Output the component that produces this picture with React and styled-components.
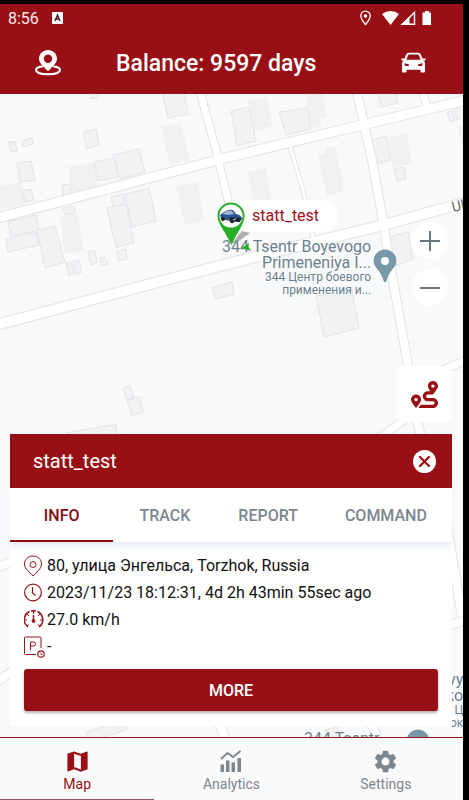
import React, { useState } from 'react';
import styled, { createGlobalStyle } from 'styled-components';
import { FaRoute } from 'react-icons/fa';
import { MdMap, MdSettings } from 'react-icons/md';

const red = '#981015';
const darkRed = '#8a0a12';
const grey = '#7c868f';

const GlobalStyle = createGlobalStyle`
  * {
    box-sizing: border-box;
  }

  body {
    margin: 0;
    background: #000;
    font-family: Roboto, "Liberation Sans", sans-serif;
  }

  button {
    font-family: inherit;
    border: none;
    padding: 0;
    cursor: pointer;
  }
`;

const Screen = styled.div`
  display: flex;
  flex-direction: column;
  min-height: 100vh;
  padding: 4px 6px 0 0;
  background: #000;
`;

const StatusBar = styled.div`
  display: flex;
  align-items: center;
  height: 28px;
  padding: 0 31px 0 8px;
  background: ${red};
  color: #fbeaea;
`;

const Clock = styled.span`
  font-size: 16px;
  margin-right: 13px;
`;

const StatusIcons = styled.div`
  display: flex;
  align-items: center;
  margin-left: auto;
`;

const Header = styled.header`
  display: flex;
  align-items: center;
  gap: 54px;
  height: 62px;
  padding: 0 37px 0 34px;
  background: ${red};
  color: #fff;
`;

const HeaderTitle = styled.h1`
  flex: 1;
  margin: 0;
  font-size: 23px;
  font-weight: 500;
  white-space: nowrap;
`;

const HeaderButton = styled.button`
  display: flex;
  background: none;
  color: #fff;
`;

const MapArea = styled.main`
  position: relative;
  display: flex;
  flex: 1;
  flex-direction: column;
  justify-content: flex-end;
  background: #f8f9fb;
  overflow: hidden;
`;

const MapCanvas = styled.div`
  position: absolute;
  inset: 0;
  overflow: hidden;
`;

const MapDrawing = styled.svg`
  display: block;
  width: 100%;
  height: 100%;
`;

const Place = styled.div`
  position: absolute;
  left: ${({ $x }) => $x}px;
  top: ${({ $y }) => $y}px;
  text-align: right;
  white-space: nowrap;
  color: #6a7f8d;
  text-shadow: 0 0 2px #fff, 0 0 2px #fff;
`;

const PlaceName = styled.div`
  font-size: 16px;
  line-height: 16px;
`;

const PlaceLocal = styled.div`
  font-size: 12px;
  line-height: 13px;
`;

const PlacePin = styled.svg`
  position: absolute;
  left: ${({ $x }) => $x}px;
  top: ${({ $y }) => $y}px;
`;

const DeviceLabel = styled.div`
  position: absolute;
  left: 232px;
  top: 106px;
  height: 32px;
  padding: 0 19px 0 20px;
  border-radius: 0 16px 16px 0;
  background: #fff;
  color: #a01019;
  font-size: 16px;
  line-height: 32px;
`;

const DevicePin = styled.svg`
  position: absolute;
  left: 216px;
  top: 107px;
`;

const Controls = styled.div`
  position: relative;
  display: flex;
  flex-direction: column;
  align-items: flex-end;
  padding: 80px 11px 12px;
`;

const ZoomGroup = styled.div`
  display: flex;
  flex-direction: column;
  gap: 10px;
  margin: 0 4px 60px 0;
`;

const ZoomButton = styled.button`
  display: flex;
  align-items: center;
  justify-content: center;
  width: 37px;
  height: 37px;
  border-radius: 50%;
  background: #fff;
`;

const RouteButton = styled.button`
  display: flex;
  align-items: center;
  justify-content: center;
  width: 56px;
  height: 56px;
  border-radius: 6px;
  background: #fff;
  color: ${red};
`;

const Panel = styled.section`
  position: relative;
  margin: 0 11px 11px 10px;
  background: #fff;
`;

const PanelHeader = styled.div`
  display: flex;
  align-items: center;
  justify-content: space-between;
  height: 54px;
  padding: 0 16px 0 23px;
  background: ${red};
  color: #fff;
`;

const PanelTitle = styled.h2`
  margin: 0;
  font-size: 20px;
  font-weight: 400;
`;

const CloseButton = styled.button`
  display: flex;
  background: none;
`;

const Tabs = styled.div`
  display: grid;
  grid-template-columns: 1fr 1fr 1fr 1.28fr;
  box-shadow: 0 5px 6px -1px #e3eaf8;
`;

const Tab = styled.button`
  height: 54px;
  padding-top: 2px;
  border-bottom: 2px solid ${({ $active }) => ($active ? darkRed : 'transparent')};
  background: #fff;
  color: ${({ $active }) => ($active ? darkRed : grey)};
  font-size: 16px;
  font-weight: 500;
`;

const PanelBody = styled.div`
  padding: 10px 14px 15px;
`;

const InfoRow = styled.div`
  display: flex;
  align-items: center;
  gap: 2px;
  height: 27px;
  color: #111;
  font-size: 16px;
`;

const InfoIcon = styled.svg`
  flex: none;
  width: 21px;
  height: 23px;
  fill: none;
  stroke: ${red};
`;

const MoreButton = styled.button`
  display: block;
  width: 100%;
  height: 42px;
  margin-top: 9px;
  border-radius: 3px;
  background: ${red};
  box-shadow: 0 2px 3px rgba(0, 0, 0, 0.3);
  color: #fff;
  font-size: 16px;
  font-weight: 500;
`;

const BottomNav = styled.nav`
  display: grid;
  grid-template-columns: repeat(3, 1fr);
  border-top: 1px solid ${red};
  background: #fafafa;
`;

const NavItem = styled.button`
  display: flex;
  flex-direction: column;
  align-items: center;
  height: 62px;
  padding-top: 10px;
  border-bottom: 1px solid ${({ $active }) => ($active ? '#8d5a5d' : 'transparent')};
  background: none;
  color: ${({ $active }) => ($active ? red : grey)};
  font-size: 14px;
  line-height: 20px;
`;

const NavIcon = styled.span`
  display: flex;
  align-items: center;
  height: 26px;
`;

const buildings = [
  '90,90 100,90 98,98 91,99',
  '162,90 184,90 188,114 168,118',
  '83,132 96,129 99,145 87,149',
  '9,142 15,141 17,151 11,152',
  '22,141 32,138 33,144 23,147',
  '17,163 31,161 35,180 20,182',
  '23,191 31,189 34,200 25,202',
  '94,162 115,158 118,177 98,181',
  '113,155 139,149 145,172 120,179',
  '62,185 70,184 72,196 64,198',
  '63,208 74,206 75,213 65,215',
  '8,222 36,215 39,230 11,236',
  '6,239 36,232 39,245 8,252',
  '37,230 55,226 65,262 45,268',
  '111,197 123,194 125,203 113,207',
  '107,208 126,204 134,243 116,247',
  '125,194 149,188 156,221 132,227',
  '88,252 95,250 97,263 91,265',
  '100,258 105,257 108,264 102,266',
  '117,251 126,249 127,259 119,261',
  '66,263 71,262 74,274 69,276',
  '73,261 79,260 82,272 76,274',
  '231,111 249,107 256,141 237,146',
  '279,112 307,108 311,129 286,135',
  '377,90 396,90 398,103 381,107',
  '371,140 386,136 391,160 376,164',
  '394,169 404,167 406,179 397,181',
  '447,112 452,111 455,120 450,122',
  '454,108 464,105 464,118 457,120',
  '212,288 232,282 234,294 216,299',
  '316,296 352,290 359,328 324,337',
  '385,238 408,232 413,259 390,268',
  '123,388 130,386 134,397 127,400',
  '127,400 139,397 143,412 132,416',
  '66,433 116,424 118,440 66,440',
  '86,732 120,722 132,722 126,730 89,742',
  '325,730 337,727 340,738 329,740',
];

const blocks = [
  '0,186 21,182 25,205 0,210',
  '161,127 181,123 190,160 170,165',
  '68,167 94,163 98,188 72,194',
  '60,217 78,214 84,250 65,254',
  '176,186 197,182 204,220 185,225',
  '248,100 267,97 272,126 254,131',
  '305,90 322,90 327,117 320,118 321,126 310,129',
  '388,137 407,134 413,164 393,167',
  '318,156 326,153 325,148 336,146 344,191 327,196',
  '248,172 266,168 272,204 254,208',
  '457,126 464,124 464,150',
];

const roads = [
  { d: 'M290 146L303 190L314 242', w: 3 },
  { d: 'M422 88L427 108', w: 7 },
  { d: 'M199 88L216 150L228 200L238 250', w: 7 },
  { d: 'M356 88L372 160L381 210L386 240L400 320L408 366L418 425L422 440', w: 8 },
  { d: 'M-4 218.500L229 157L358 126L467 100', w: 9 },
  { d: 'M-4 325L200 271L330 238L380 226L467 202', w: 10 },
  { d: 'M374 442L405 419L440 371L467 360', w: 7 },
  { d: 'M446 520L462 616', w: 8 },
  { d: 'M440 629L467 619', w: 8 },
  { d: 'M-4 568L16 560', w: 8 },
  { d: 'M-4 682L16 669', w: 8 },
  { d: 'M216 716L228 744', w: 8 },
  { d: 'M368 716L380 744', w: 8 },
];

function StreetMap() {
  return (
    <MapDrawing viewBox="0 94 463 643" preserveAspectRatio="xMidYMin slice" aria-hidden="true">
      {blocks.map((points) => (
        <polygon key={points} points={points} fill="#f1f1f1" />
      ))}
      {buildings.map((points) => (
        <polygon key={points} points={points} fill="#f1f2f4" stroke="#e2e4e7" />
      ))}
      {roads.map(({ d, w }) => (
        <path key={d} d={d} fill="none" stroke="#e1e3e6" strokeWidth={w + 2} />
      ))}
      {roads.map(({ d, w }) => (
        <path key={d} d={d} fill="none" stroke="#fff" strokeWidth={w} />
      ))}
      <text x="453" y="212" transform="rotate(-12 453 212)" fontSize="14" fill="#5f6468">
        Ul
      </text>
    </MapDrawing>
  );
}

function LocationPin({ x, y }) {
  return (
    <PlacePin $x={x} $y={y} width="24" height="34" viewBox="0 0 24 34">
      <path
        d="M12 1C5.500 1 1 6 1 12C1 19 8.500 21 11 32Q12 34 13 32C15.500 21 23 19 23 12C23 6 18.500 1 12 1Z"
        fill="#7899a8"
        stroke="#5f7f8f"
        strokeWidth="0.6"
      />
      <circle cx="12" cy="12" r="4" fill="#fff" />
    </PlacePin>
  );
}

function DeviceMarker() {
  return (
    <DevicePin width="40" height="52" viewBox="0 0 40 52">
      <path d="M16 42L26 30L34 32L20 42Z" fill="#8f8f8f" opacity="0.7" />
      <path d="M1.500 15A13.500 13.500 0 0 1 28.500 15C28.500 23 20 33 15.500 44C11 33 1.500 23 1.500 15Z" fill="#24ad25" />
      <circle cx="15" cy="15" r="11.500" fill="#fff" />
      <path d="M4 14L8 11Q12 8 17 9L20 13Q26 14 26 18L23 21L14 20L5 18Z" fill="#2c5590" />
      <path d="M7 13L10 10Q14 9 16 10L18 13L12 14Z" fill="#9fb7d4" />
      <path d="M14 16L25 17L24 21L14 20Z" fill="#18253d" />
      <circle cx="7" cy="18" r="2" fill="#222" />
      <circle cx="16" cy="20" r="2.200" fill="#222" />
      <path d="M17 19L20 17.500" stroke="#c9d7ea" />
      <path d="M25.500 47L33 42L32.500 46L35 50Z" fill="#24ad25" />
    </DevicePin>
  );
}

function TrackerIcon() {
  return (
    <svg width="28" height="26" viewBox="0 0 28 26">
      <path
        fillRule="evenodd"
        fill="#fff"
        d="M14 0C9 0 5 3.800 5 8.700C5 13.500 10 16.500 12.500 20Q14 21.500 15.500 20C18 16.500 23 13.500 23 8.700C23 3.800 19 0 14 0ZM14 4.600A4.200 4.200 0 1 1 14 13A4.200 4.200 0 0 1 14 4.600Z"
      />
      <path
        d="M8 16.500C4 17 2 18.500 2 20C2 22.500 7 24.300 14 24.300S26 22.500 26 20C26 18.500 24 17 20 16.500"
        fill="none"
        stroke="#fff"
        strokeWidth="2"
        strokeLinecap="round"
      />
    </svg>
  );
}

function CarIcon() {
  return (
    <svg width="25" height="22" viewBox="0 0 25 22" fill="#fff">
      <path
        fillRule="evenodd"
        d="M2.800 8.200L5 2.800Q5.800 0.800 8 0.800H17Q19.200 0.800 20 2.800L22.200 8.200Q24 9.500 24 11.500V19.500Q24 20.600 22.900 20.600H20.600Q19.500 20.600 19.500 19.500V17.800H5.500V19.500Q5.500 20.600 4.400 20.600H2.100Q1 20.600 1 19.500V11.500Q1 9.500 2.800 8.200ZM5.300 7.800H19.700L18 3.500Q17.600 2.600 16.700 2.600H8.300Q7.400 2.600 7 3.500ZM3.500 11.300L7.800 12.300V13.900H4.800Q3.500 13.900 3.500 12.600ZM21.500 11.300L17.200 12.300V13.900H20.200Q21.500 13.900 21.500 12.600Z"
      />
      <path d="M0.400 6.500H3.400L2.800 8.600H1.200Q0 8.600 0.400 6.500ZM24.600 6.500H21.600L22.200 8.600H23.800Q25 8.600 24.600 6.500Z" />
    </svg>
  );
}

function AnalyticsIcon() {
  return (
    <svg width="24" height="24" viewBox="0 0 24 24" fill="currentColor">
      <path d="M1.500 15.500h3.500v7.500h-3.500zM7 11.500h3.500v11.500H7zM12.500 13.500h3.500v9.500h-3.500zM18.500 9h3.500V23h-3.500z" />
      <path d="M2 10L8.500 4L14 8L21.500 2" fill="none" stroke="currentColor" strokeWidth="1.800" />
    </svg>
  );
}

function StatusIndicators() {
  return (
    <StatusIcons>
      <svg width="73" height="16" viewBox="0 0 73 16" fill="#fff">
        <path
          d="M6.500 1.200C3.700 1.200 1.800 3.200 1.800 5.800C1.800 9 6.500 14.500 6.500 14.500S11.200 9 11.200 5.800C11.200 3.200 9.300 1.200 6.500 1.200Z"
          fill="none"
          stroke="#fff"
          strokeWidth="1.300"
        />
        <circle cx="6.500" cy="6" r="1.700" />
        <path d="M23 4Q31.500 -2 40 4L31.500 15Z" />
        <path d="M55.500 2.500V14.300H43.500Z" fill="none" stroke="#fff" strokeWidth="1.400" />
        <path d="M41.500 15L50.500 6.500V15Z" />
        <path d="M66 1h4v1.500h2V15H63.500V2.500H66z" />
      </svg>
    </StatusIcons>
  );
}

const info = [
  {
    text: '80, улица Энгельса, Torzhok, Russia',
    icon: (
      <>
        <path d="M9 2C4 2 0.500 5.500 0.500 10C0.500 15 6 18.500 9 22C12 18.500 17.500 15 17.500 10C17.500 5.500 14 2 9 2Z" />
        <circle cx="9" cy="10.500" r="3" />
      </>
    ),
  },
  {
    text: '2023/11/23 18:12:31, 4d 2h 43min 55sec ago',
    icon: (
      <>
        <circle cx="9" cy="11.500" r="8.400" strokeWidth="1.200" />
        <path d="M8.500 6V12L11.500 14.500" strokeWidth="1.200" />
      </>
    ),
  },
  {
    text: '27.0 km/h',
    icon: (
      <>
        <path d="M4 19A9 9 0 0 1 5.500 3.500M7 3A9 9 0 0 1 12 3M13.500 3.500A9 9 0 0 1 15 19" strokeWidth="1.500" />
        <path d="M9.500 3V6M3 6L5 8M16 6L14 8M0.500 12H3M18.500 12H16M3 18L5 16.500M16 18L14 16.500" />
        <path d="M9.500 7V12" strokeWidth="1.500" />
        <circle cx="9.500" cy="13" r="1.500" fill={red} />
      </>
    ),
  },
  {
    text: '-',
    icon: (
      <>
        <path d="M12 19.500H1.500Q0.500 19.500 0.500 18.500V3Q0.500 2 1.500 2H16Q17 2 17 3V13" />
        <path d="M6.500 15V7H9.500Q11.500 7 11.500 9T9.500 11H6.500" />
        <circle cx="17" cy="19" r="3.200" strokeWidth="1.200" />
        <path d="M17 17.500V19.500H18.500" strokeWidth="0.800" />
      </>
    ),
  },
];

const tabs = ['INFO', 'TRACK', 'REPORT', 'COMMAND'];

const navItems = [
  { label: 'Map', icon: <MdMap size={27} /> },
  { label: 'Analytics', icon: <AnalyticsIcon /> },
  { label: 'Settings', icon: <MdSettings size={27} /> },
];

function DevicePanel() {
  const [tab, setTab] = useState('INFO');

  return (
    <Panel>
      <PanelHeader>
        <PanelTitle>statt_test</PanelTitle>
        <CloseButton aria-label="Close">
          <svg width="23" height="23" viewBox="0 0 23 23">
            <circle cx="11.500" cy="11.500" r="11.500" fill="#fff" />
            <path d="M7 7L16 16M16 7L7 16" stroke={red} strokeWidth="2.300" strokeLinecap="round" />
          </svg>
        </CloseButton>
      </PanelHeader>
      <Tabs role="tablist">
        {tabs.map((name) => (
          <Tab
            key={name}
            role="tab"
            aria-selected={tab === name}
            $active={tab === name}
            onClick={() => setTab(name)}
          >
            {name}
          </Tab>
        ))}
      </Tabs>
      <PanelBody>
        {info.map(({ text, icon }) => (
          <InfoRow key={text}>
            <InfoIcon viewBox="0 0 21 23">{icon}</InfoIcon>
            {text}
          </InfoRow>
        ))}
        <MoreButton>MORE</MoreButton>
      </PanelBody>
    </Panel>
  );
}

export default function App() {
  const [page, setPage] = useState('Map');

  return (
    <Screen>
      <GlobalStyle />
      <StatusBar>
        <Clock>8:56</Clock>
        <svg width="11" height="12" viewBox="0 0 11 12">
          <rect width="11" height="12" rx="1" fill="#fff" />
          <path d="M3 9L5.500 3L8 9M4 7H7" fill="none" stroke="#4d1518" strokeWidth="1.400" />
        </svg>
        <StatusIndicators />
      </StatusBar>
      <Header>
        <HeaderButton aria-label="Find on map">
          <TrackerIcon />
        </HeaderButton>
        <HeaderTitle>Balance: 9597 days</HeaderTitle>
        <HeaderButton aria-label="Vehicles">
          <CarIcon />
        </HeaderButton>
      </Header>
      <MapArea>
        <MapCanvas>
          <StreetMap />
          <Place $x={222} $y={145}>
            <PlaceName>344 Tsentr Boyevogo</PlaceName>
            <PlaceName>Primeneniya I...</PlaceName>
            <PlaceLocal>344 Центр боевого</PlaceLocal>
            <PlaceLocal>применения и...</PlaceLocal>
          </Place>
          <LocationPin x={373} y={155} />
          <Place $x={446} $y={578}>
            <PlaceName>vy</PlaceName>
            <PlaceName>ko</PlaceName>
            <PlaceLocal>Ц</PlaceLocal>
            <PlaceLocal>ок</PlaceLocal>
          </Place>
          <Place $x={304} $y={637}>
            <PlaceName>344 Tsentr</PlaceName>
          </Place>
          <LocationPin x={406} y={635} />
          <DeviceLabel>statt_test</DeviceLabel>
          <DeviceMarker />
        </MapCanvas>
        <Controls>
          <ZoomGroup>
            <ZoomButton aria-label="Zoom in">
              <svg width="22" height="22" viewBox="0 0 22 22">
                <path d="M1 11H21M11 1V21" stroke="#6a7580" strokeWidth="2" />
              </svg>
            </ZoomButton>
            <ZoomButton aria-label="Zoom out">
              <svg width="22" height="22" viewBox="0 0 22 22">
                <path d="M1 11H21" stroke="#6a7580" strokeWidth="2" />
              </svg>
            </ZoomButton>
          </ZoomGroup>
          <RouteButton aria-label="Route">
            <FaRoute size={27} />
          </RouteButton>
        </Controls>
        <DevicePanel />
      </MapArea>
      <BottomNav>
        {navItems.map(({ label, icon }) => (
          <NavItem key={label} $active={page === label} onClick={() => setPage(label)}>
            <NavIcon>{icon}</NavIcon>
            {label}
          </NavItem>
        ))}
      </BottomNav>
    </Screen>
  );
}
